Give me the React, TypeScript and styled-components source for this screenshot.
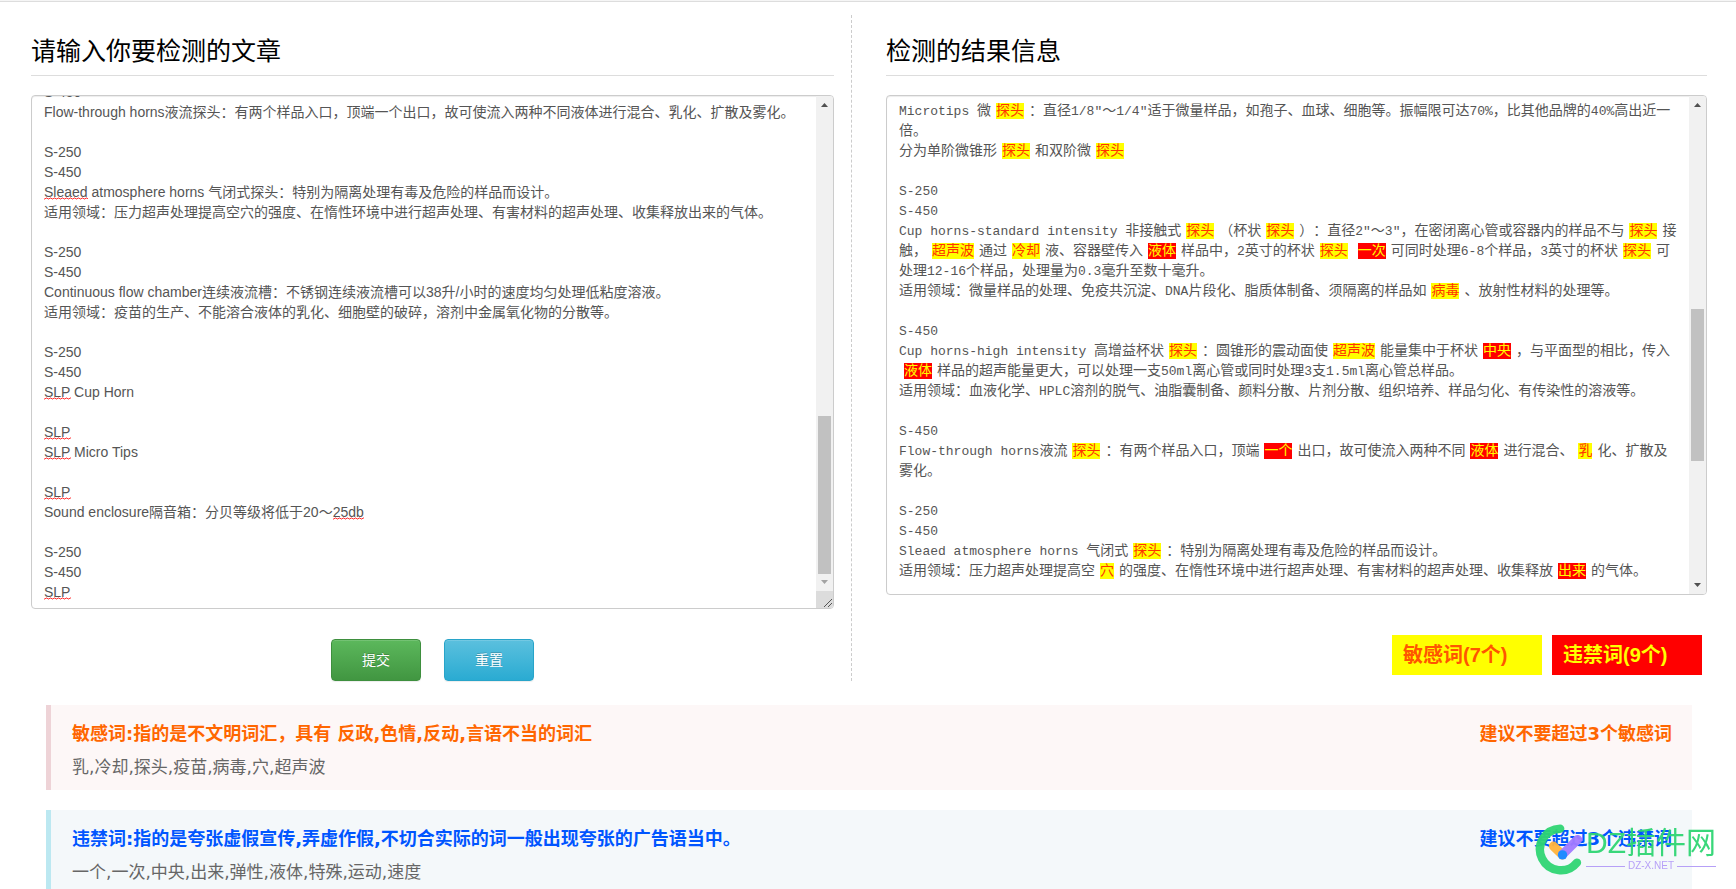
import React, { useLayoutEffect, useRef } from "react";
import styled, { createGlobalStyle } from "styled-components";

const sans = `"Liberation Sans", "Noto Sans CJK SC", sans-serif`;
const mono = `"Liberation Mono", "Noto Sans CJK SC", monospace`;

const GlobalStyle = createGlobalStyle`
  html { scrollbar-width: none; }
  body {
    margin: 0;
    background: #fff;
    color: #555;
    font: 14px/20px ${sans};
    text-spacing-trim: space-all;
  }
  *, *::before, *::after { box-sizing: border-box; }
`;

const TopBar = styled.header`
  height: 2px;
  background: #f5f5f5;
  border-bottom: 1px solid #ddd;
`;

const Columns = styled.main`
  display: grid;
  grid-template-columns: calc(50% - 16px) minmax(0, 1fr);
  margin-top: 13px;
`;

const InputColumn = styled.form`
  padding: 0 17px 0 31px;
  border-right: 1px dashed #ccc;
`;

const ResultColumn = styled.section`
  padding: 0 29px 0 34px;
`;

const Title = styled.h2`
  margin: 0 0 19px;
  padding: 19px 0 11px;
  border-bottom: 1px solid #ddd;
  color: #000;
  font: 400 25px/30px "Noto Sans CJK SC", sans-serif;
`;

const Box = styled.div`
  display: flex;
  overflow: hidden;
  border: 1px solid #ccc;
  border-radius: 4px;
  background: #fff;
  box-shadow: inset 0 1px 1px rgba(0, 0, 0, 0.075);
`;

const ResultBox = styled(Box)`
  height: 500px;
`;

const EditorArea = styled.div`
  position: relative;
  display: flex;
  flex: 1;
  min-width: 0;
`;

const Editor = styled.textarea`
  flex: 1;
  min-width: 0;
  padding: 6px 12px;
  border: 0;
  outline: 0;
  resize: none;
  background: transparent;
  color: #555;
  font: 14px/20px ${sans};
  scrollbar-width: none;
`;

const SpellLayer = styled.div`
  position: absolute;
  inset: 0;
  overflow: hidden;
  padding: 6px 12px;
  pointer-events: none;
`;

const SpellLine = styled.div`
  display: flex;
  align-items: flex-end;
  height: 20px;
  padding-bottom: 2px;
`;

const Squiggle = styled.svg<{ $start: number; $width: number }>`
  width: ${(p) => p.$width}px;
  height: 3px;
  margin-left: ${(p) => p.$start}px;
`;

const ResultText = styled.div`
  flex: 1;
  min-width: 0;
  overflow-y: auto;
  padding: 5px 12px;
  font: 14px/20px ${mono};
  scrollbar-width: none;
`;

const ResultLine = styled.p`
  min-height: 20px;
  margin: 0;
`;

const Latin = styled.span`
  font-size: 13px;
  line-height: 1;
  white-space: pre-wrap;
`;

const Word = styled.mark<{ $banned?: boolean }>`
  margin: 0 5px;
  background: ${(p) => (p.$banned ? "#f00" : "#ff0")};
  color: ${(p) => (p.$banned ? "#ff0" : "#ff3300")};
`;

const Bar = styled.div`
  display: flex;
  flex-direction: column;
  width: 17px;
  background: #f1f1f1;
`;

const Arrow = styled.svg`
  display: block;
  width: 17px;
  height: 17px;
`;

const Track = styled.div<{ $rows: string }>`
  display: grid;
  flex: 1;
  grid-template-rows: ${(p) => p.$rows};
  padding: 0 2px;
`;

const Thumb = styled.div`
  grid-row: 2;
  background: #c1c1c1;
`;

const Corner = styled.svg`
  display: block;
  width: 17px;
  height: 17px;
  background: #dcdcdc;
`;

const Actions = styled.div`
  display: flex;
  justify-content: center;
  gap: 23px;
  margin-top: 30px;
`;

const Button = styled.button<{ $tone: "success" | "info" }>`
  width: 90px;
  height: 42px;
  padding: 0;
  border: 1px solid ${(p) => (p.$tone === "success" ? "#3e8f3e" : "#28a4c9")};
  border-radius: 4px;
  background: ${(p) =>
    p.$tone === "success"
      ? "linear-gradient(#5cb85c, #419641)"
      : "linear-gradient(#5bc0de, #2aabd2)"};
  box-shadow: inset 0 1px 0 rgba(255, 255, 255, 0.15), 0 1px 1px rgba(0, 0, 0, 0.075);
  color: #fff;
  font: 14px/20px ${sans};
  text-shadow: 0 -1px 0 rgba(0, 0, 0, 0.2);
`;

const Counters = styled.div`
  display: flex;
  justify-content: flex-end;
  gap: 10px;
  margin: 40px 5px 0 0;
`;

const Counter = styled.div<{ $banned?: boolean }>`
  width: 150px;
  padding: 0 11px;
  background: ${(p) => (p.$banned ? "#f00" : "#ff0")};
  color: ${(p) => (p.$banned ? "#ff0" : "#ff5500")};
  font: 700 20px/40px ${sans};
`;

const Notices = styled.section`
  display: flex;
  flex-direction: column;
  gap: 20px;
  margin: 24px 44px 0 46px;
`;

const Notice = styled.article<{ $banned?: boolean }>`
  padding: 15px 20px 8px 21px;
  border-left: 5px solid ${(p) => (p.$banned ? "#bce8f1" : "#eed3d7")};
  background: ${(p) => (p.$banned ? "#f4f8fa" : "#fdf7f7")};
`;

const NoticeHead = styled.div<{ $banned?: boolean }>`
  display: flex;
  justify-content: space-between;
  margin-bottom: 4px;
  color: ${(p) => (p.$banned ? "#0055ff" : "#ff6600")};
  font: 700 18px/28px "DejaVu Sans", "Noto Sans CJK SC", sans-serif;
`;

const Definition = styled.h3`
  margin: 0;
  font: inherit;
`;

const WordList = styled.p`
  margin: 0;
  color: #666;
  font: 17px/30px "DejaVu Sans", "Noto Sans CJK SC", sans-serif;
`;

const Watermark = styled.aside`
  position: fixed;
  right: 20px;
  bottom: 14px;
  display: flex;
  gap: 4px;
  opacity: 0.95;
  pointer-events: none;
`;

const Logo = styled.svg`
  width: 47px;
  height: 51px;
`;

const Brand = styled.div`
  padding-top: 2px;
  color: #2fd573;
  font: 400 30px/34px ${sans};
`;

const Site = styled.div`
  display: flex;
  align-items: center;
  gap: 3px;
  color: #b39bf7;
  font: 10px/12px ${sans};

  &::before,
  &::after {
    content: "";
    flex: 1;
    height: 1px;
    background: #b39bf7;
  }
`;

const article = `S-450
Flow-through horns液流探头：有两个样品入口，顶端一个出口，故可使流入两种不同液体进行混合、乳化、扩散及雾化。

S-250
S-450
Sleaed atmosphere horns 气闭式探头：特别为隔离处理有毒及危险的样品而设计。
适用领域：压力超声处理提高空穴的强度、在惰性环境中进行超声处理、有害材料的超声处理、收集释放出来的气体。

S-250
S-450
Continuous flow chamber连续液流槽：不锈钢连续液流槽可以38升/小时的速度均匀处理低粘度溶液。
适用领域：疫苗的生产、不能溶合液体的乳化、细胞壁的破碎，溶剂中金属氧化物的分散等。

S-250
S-450
SLP Cup Horn

SLP
SLP Micro Tips

SLP
Sound enclosure隔音箱：分贝等级将低于20～25db

S-250
S-450
SLP`;

// Where each unknown word starts in its line, and how wide it is drawn.
const misspellings = [
  { word: "Sleaed", start: 0, width: 44 },
  { word: "SLP", start: 0, width: 27 },
  { word: "25db", start: 289, width: 31 },
];

// [word] is a sensitive word, {word} a banned one.
const result = `Microtips 微[探头]：直径1/8"～1/4"适于微量样品，如孢子、血球、细胞等。振幅限可达70%，比其他品牌的40%高出近一倍。
分为单阶微锥形[探头]和双阶微[探头]

S-250
S-450
Cup horns-standard intensity 非接触式[探头]（杯状[探头]）：直径2"～3"，在密闭离心管或容器内的样品不与[探头]接触，[超声波]通过[冷却]液、容器壁传入{液体}样品中，2英寸的杯状[探头]{一次}可同时处理6-8个样品，3英寸的杯状[探头]可处理12-16个样品，处理量为0.3毫升至数十毫升。
适用领域：微量样品的处理、免疫共沉淀、DNA片段化、脂质体制备、须隔离的样品如[病毒]、放射性材料的处理等。

S-450
Cup horns-high intensity 高增益杯状[探头]：圆锥形的震动面使[超声波]能量集中于杯状{中央}，与平面型的相比，传入{液体}样品的超声能量更大，可以处理一支50ml离心管或同时处理3支1.5ml离心管总样品。
适用领域：血液化学、HPLC溶剂的脱气、油脂囊制备、颜料分散、片剂分散、组织培养、样品匀化、有传染性的溶液等。

S-450
Flow-through horns液流[探头]：有两个样品入口，顶端{一个}出口，故可使流入两种不同{液体}进行混合、[乳]化、扩散及雾化。

S-250
S-450
Sleaed atmosphere horns 气闭式[探头]：特别为隔离处理有毒及危险的样品而设计。
适用领域：压力超声处理提高空[穴]的强度、在惰性环境中进行超声处理、有害材料的超声处理、收集释放{出来}的气体。`;

function markLine(line: string) {
  return line
    .split(/(\[[^\]]+\]|\{[^}]+\}|[\x20-\x5a\x61-\x7a]+)/)
    .filter(Boolean)
    .map((part, i) => {
      if (part[0] === "[") return <Word key={i}>{part.slice(1, -1)}</Word>;
      if (part[0] === "{") return <Word key={i} $banned>{part.slice(1, -1)}</Word>;
      if (/^[\x20-\x7e]/.test(part)) return <Latin key={i}>{part}</Latin>;
      return part;
    });
}

function SpellMark({ line }: { line: string }) {
  const found = misspellings.find((m) => line.includes(m.word));
  return (
    <SpellLine>
      {found && (
        <Squiggle $start={found.start} $width={found.width}>
          <path
            d={"M0 2" + "l1 0l1 -1l1 0l1 1".repeat(Math.ceil(found.width / 4))}
            stroke="#f33"
            fill="none"
          />
        </Squiggle>
      )}
    </SpellLine>
  );
}

function ScrollBar({ before, size, after, atEnd, grip }: {
  before: number; size: number; after: number; atEnd?: boolean; grip?: boolean;
}) {
  return (
    <Bar aria-hidden="true">
      <Arrow viewBox="0 0 17 17"><path d="M5 11h7L8.500 7z" fill="#505050" /></Arrow>
      <Track $rows={`${before}fr ${size}fr ${after}fr`}><Thumb /></Track>
      <Arrow viewBox="0 0 17 17"><path d="M5 6h7L8.500 10z" fill={atEnd ? "#a3a3a3" : "#505050"} /></Arrow>
      {grip && (
        <Corner viewBox="0 0 17 17">
          <path d="M8 16l8-8M12 16l4-4" stroke="#555" fill="none" />
        </Corner>
      )}
    </Bar>
  );
}

export default function App() {
  const editor = useRef<HTMLTextAreaElement>(null);
  const layer = useRef<HTMLDivElement>(null);

  const syncScroll = () => {
    if (editor.current && layer.current) layer.current.scrollTop = editor.current.scrollTop;
  };

  useLayoutEffect(() => {
    if (editor.current) editor.current.scrollTop = editor.current.scrollHeight;
    syncScroll();
  }, []);

  return (
    <>
      <GlobalStyle />
      <TopBar />
      <Columns>
        <InputColumn onSubmit={(e) => e.preventDefault()}>
          <Title><label htmlFor="article">请输入你要检测的文章</label></Title>
          <Box>
            <EditorArea>
              <SpellLayer ref={layer} aria-hidden="true">
                {article.split("\n").map((line, i) => <SpellMark key={i} line={line} />)}
              </SpellLayer>
              <Editor
                id="article"
                ref={editor}
                rows={25}
                defaultValue={article}
                spellCheck={false}
                onScroll={syncScroll}
              />
            </EditorArea>
            <ScrollBar before={303} size={158} after={0} atEnd grip />
          </Box>
          <Actions>
            <Button type="submit" $tone="success">提交</Button>
            <Button type="reset" $tone="info">重置</Button>
          </Actions>
        </InputColumn>
        <ResultColumn>
          <Title>检测的结果信息</Title>
          <ResultBox>
            <ResultText>
              {result.split("\n").map((line, i) => (
                <ResultLine key={i}>{markLine(line)}</ResultLine>
              ))}
            </ResultText>
            <ScrollBar before={196} size={153} after={116} />
          </ResultBox>
          <Counters>
            <Counter>敏感词(7个)</Counter>
            <Counter $banned>违禁词(9个)</Counter>
          </Counters>
        </ResultColumn>
      </Columns>
      <Notices>
        <Notice>
          <NoticeHead>
            <Definition>敏感词:指的是不文明词汇，具有 反政,色情,反动,言语不当的词汇</Definition>
            <span>建议不要超过3个敏感词</span>
          </NoticeHead>
          <WordList>乳,冷却,探头,疫苗,病毒,穴,超声波</WordList>
        </Notice>
        <Notice $banned>
          <NoticeHead $banned>
            <Definition>违禁词:指的是夸张虚假宣传,弄虚作假,不切合实际的词一般出现夸张的广告语当中。</Definition>
            <span>建议不要超过3个违禁词</span>
          </NoticeHead>
          <WordList>一个,一次,中央,出来,弹性,液体,特殊,运动,速度</WordList>
        </Notice>
      </Notices>
      <Watermark>
        <Logo viewBox="0 0 140 152" fill="none" strokeLinecap="round">
          <path d="M75 14A62 62 0 1 0 125 115" stroke="#2fd573" strokeWidth="25" />
          <path d="M55 66l27 26" stroke="#ffb43c" strokeWidth="27" />
          <path d="M127 46L82 91" stroke="#a37bff" strokeWidth="27" />
          <circle cx="82" cy="92" r="14" fill="#1585ff" />
        </Logo>
        <div>
          <Brand>DZ插件网</Brand>
          <Site>DZ-X.NET</Site>
        </div>
      </Watermark>
    </>
  );
}
